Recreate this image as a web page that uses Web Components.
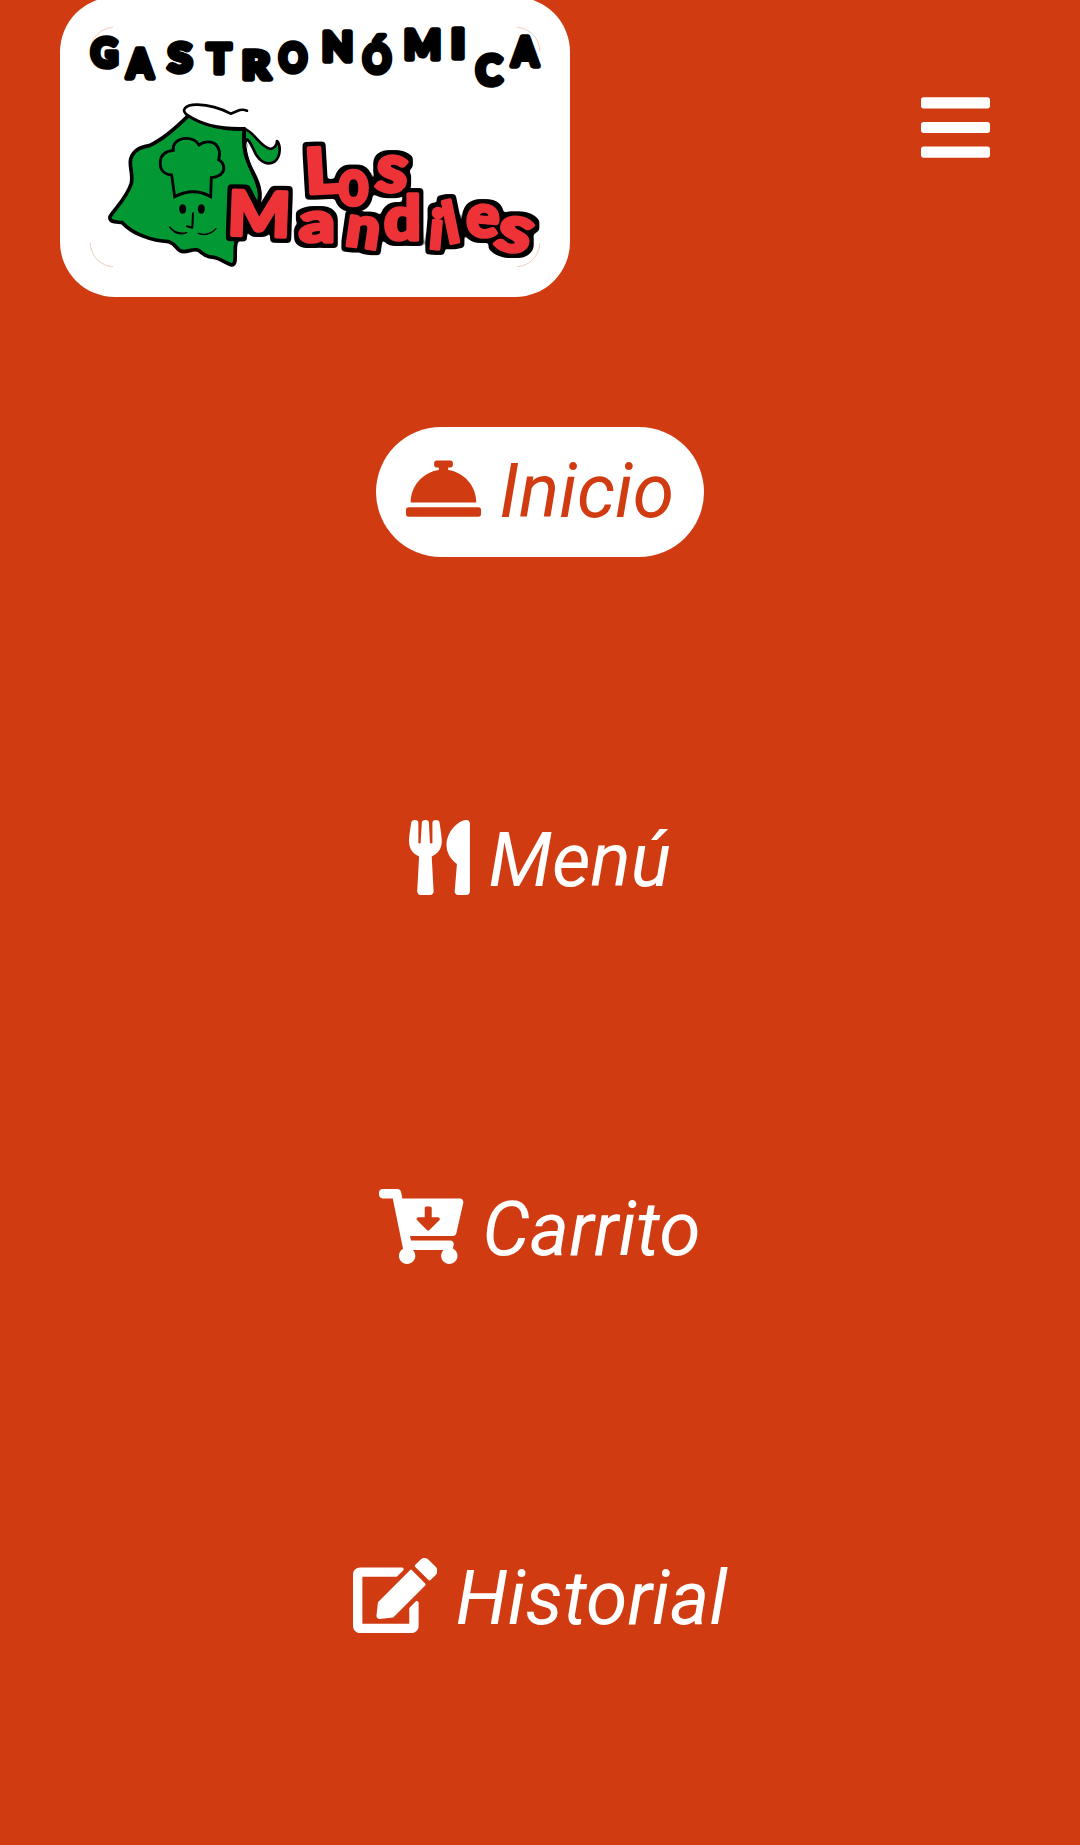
<!DOCTYPE html>
<html lang="es">
<head>
<meta charset="utf-8">
<title>Gastronómica Los Mandiles</title>
<style>
  html, body { margin: 0; background: #d13b11; }
  body { height: 1845px; overflow: hidden; font-family: Roboto, "Open Sans", sans-serif; }
</style>
</head>
<body>
<mandiles-page>
  <brand-logo slot="brand"></brand-logo>
  <menu-toggle slot="toggle"></menu-toggle>
  <nav-item icon="bell" active>Inicio</nav-item>
  <nav-item icon="utensils">Menú</nav-item>
  <nav-item icon="cart">Carrito</nav-item>
  <nav-item icon="edit">Historial</nav-item>
</mandiles-page>

<template id="page-tpl">
  <style>
    :host { display: block; height: 1845px; overflow: hidden; background: #d13b11; color: #fff; }
    header { display: flex; justify-content: space-between; align-items: flex-start; height: 300px; padding: 0 90px 0 60px; margin-top: -3px; }
    nav { display: flex; flex-direction: column; align-items: center; gap: 239px; padding-top: 130px; }
  </style>
  <header><slot name="brand"></slot><slot name="toggle"></slot></header>
  <nav><slot></slot></nav>
</template>

<template id="logo-tpl">
  <style>
    :host { display: block; box-sizing: border-box; width: 510px; height: 300px; padding: 30px; border-radius: 55px; background: #fff; }
    svg { display: block; overflow: visible; }
    text { white-space: pre; }
    .title { font: 900 40px Lato, Roboto, sans-serif; fill: #000; stroke: #000; stroke-width: 5.500; stroke-linejoin: round; }
    .name { font: 900 60px Lato, Roboto, sans-serif; fill: #ee3338; stroke: #ee3338; stroke-width: 3.600; stroke-linejoin: round; filter: url(#outline); }
  </style>
  <svg width="450" height="240" viewBox="90 27 450 240">
    <defs>
      <filter id="outline" x="-10%" y="-20%" width="120%" height="140%" color-interpolation-filters="sRGB">
        <feMorphology in="SourceAlpha" operator="dilate" radius="4"/>
        <feGaussianBlur stdDeviation="1.600"/>
        <feComponentTransfer result="edge"><feFuncA type="linear" slope="4" intercept="-1.300"/></feComponentTransfer>
        <feMerge><feMergeNode in="edge"/><feMergeNode in="SourceGraphic"/></feMerge>
      </filter>
    </defs>
    <g fill="none" stroke="#f0bcae" stroke-width=".8">
      <path d="M90.300 51A24 24 0 0 1 113 27.300M517 27.300A24 24 0 0 1 539.700 51M539.700 243A24 24 0 0 1 517 266.700M113 266.700A24 24 0 0 1 90.300 243"/>
    </g>
    <g transform="translate(90 90) scale(.333333)" stroke="#000" stroke-linejoin="round" stroke-linecap="round">
      <path fill="#029935" stroke-width="11" d="M295 77C260 112 220 148 178 167C152 172 131 178 122 207C117 232 130 249 124 280C111 323 77 353 60 380C57 397 76 395 97 398C128 432 186 453 236 455C262 462 258 484 281 485C298 484 312 475 326 481C339 492 350 501 371 502C393 507 411 521 425 525C443 524 431 488 438 458C458 430 480 403 502 355C517 327 510 293 490 252C474 220 463 180 464 117C400 119 350 109 295 77Z"/>
      <path fill="#fff" stroke="none" d="M468 155C477 190 494 211 540 225V300L513 290C495 250 471 209 468 155Z"/>
      <path fill="#029935" stroke-width="8" d="M464 117C492 125 511 172 542 177C554 174 561 165 561 153C572 165 573 199 555 214C533 228 513 216 499 195C485 170 479 144 464 148Z"/>
      <path fill="none" stroke-width="11" d="M463 120C455 190 476 220 492 253C510 288 514 312 504 347"/>
      <path fill="#fff" stroke="none" d="M295 77C269 61 285 43 323 44C362 45 401 60 422 71L463 110C400 115 338 106 295 77Z"/>
      <path fill="none" stroke-width="8" d="M295 77C269 61 285 43 323 44C362 45 401 60 422 71L442 63Q456 56 471 62M295 77C340 107 400 117 463 115"/>
      <path fill="none" stroke-width="8.500" stroke-linejoin="miter" stroke-linecap="butt" d="M254 320L245 255C217 253 209 235 211 214C213 193 228 183 250 181C247 159 266 145 288 145C307 145 320 153 327 165C343 153 365 153 378 164C391 177 390 195 386 209C401 216 406 236 397 248C389 259 378 262 364 263L362 320C327 300 289 302 254 320Z"/>
      <g stroke="none"><ellipse cx="278" cy="357" rx="10.500" ry="14.500"/><ellipse cx="334" cy="357" rx="10.500" ry="14.500"/></g>
      <path fill="none" stroke-width="6" d="M309 370L307 413L291 409"/>
      <path stroke-width="4" d="M239 411Q259 435 290 428Q258 440 239 411ZM378 416Q356 440 325 430Q354 442 378 416Z"/>
    </g>
    <text class="title" id="title"></text>
    <text class="name" id="los"></text>
    <text class="name" id="mandiles"></text>
  </svg>
</template>

<template id="toggle-tpl">
  <style>
    :host { display: block; margin-top: 91px; }
    button { display: block; margin: 0; padding: 0; border: 0; background: none; color: #fff; }
    svg { display: block; width: 69px; height: 79px; }
  </style>
  <button aria-label="Menu"><svg viewBox="0 0 448 512" preserveAspectRatio="xMaxYMid meet" fill="currentColor"><path d="M16 132h416c8.837 0 16-7.163 16-16V76c0-8.837-7.163-16-16-16H16C7.163 60 0 67.163 0 76v40c0 8.837 7.163 16 16 16zm0 160h416c8.837 0 16-7.163 16-16v-40c0-8.837-7.163-16-16-16H16c-8.837 0-16 7.163-16 16v40c0 8.837 7.163 16 16 16zm0 160h416c8.837 0 16-7.163 16-16v-40c0-8.837-7.163-16-16-16H16c-8.837 0-16 7.163-16 16v40c0 8.837 7.163 16 16 16z"/></svg></button>
</template>

<template id="item-tpl">
  <style>
    :host { display: block; }
    a { display: flex; align-items: center; gap: 18.500px; box-sizing: border-box; height: 130px; padding: 0 30px 2px; border-radius: 65px; color: #fff; font-size: 75px; line-height: 88px; font-style: italic; white-space: nowrap; }
    :host([active]) a { background: #fff; color: #d13b11; }
    svg { display: block; height: 75px; margin-top: -5px; }
  </style>
  <a><svg fill="currentColor"><path/></svg><span><slot></slot></span></a>
</template>

<script>
const stamp = (host, id) => {
  const root = host.attachShadow({ mode: 'open' });
  root.append(document.getElementById(id).content.cloneNode(true));
  return root;
};

const ICONS = {
  bell: [512, 'M288 130.54V112h16c8.84 0 16-7.16 16-16V80c0-8.84-7.16-16-16-16h-96c-8.84 0-16 7.16-16 16v16c0 8.84 7.16 16 16 16h16v18.54C115.49 146.11 32 239.18 32 352h448c0-112.82-83.49-205.89-192-221.46zM496 384H16c-8.84 0-16 7.16-16 16v32c0 8.84 7.16 16 16 16h480c8.84 0 16-7.16 16-16v-32c0-8.84-7.16-16-16-16z'],
  utensils: [416, 'M207.9 15.2c.8 4.7 16.1 94.5 16.1 128.8 0 52.3-27.8 89.6-68.9 104.6L168 486.7c.7 13.7-10.2 25.3-24 25.3H80c-13.7 0-24.7-11.5-24-25.3l12.9-238.1C27.7 233.6 0 196.2 0 144 0 109.6 15.3 19.9 16.1 15.2 19.3-5.1 61.4-5.4 64 16.3v141.2c1.3 3.4 15.1 3.2 16 0 1.4-25.3 7.9-139.2 8-141.8 3.3-20.8 44.7-20.8 47.9 0 .2 2.7 6.6 116.5 8 141.8.9 3.2 14.8 3.4 16 0V16.3c2.6-21.6 44.8-21.4 48-1.1zm119.2 285.7l-15 185.1c-1.2 14 9.9 26 23.9 26h56c13.3 0 24-10.7 24-24V24c0-13.2-10.7-24-24-24-82.5 0-221.4 178.5-64.9 300.9z'],
  cart: [576, 'M504.717 320H211.572l6.545 32h268.418c15.401 0 26.816 14.301 23.403 29.319l-5.517 24.276C523.112 414.668 536 433.828 536 456c0 31.202-25.519 56.444-56.824 55.994-29.823-.429-54.35-24.631-55.155-54.447-.44-16.287 6.085-31.049 16.803-41.548H231.176C241.553 426.165 248 440.326 248 456c0 31.813-26.528 57.431-58.67 55.938-28.54-1.325-51.751-24.385-53.251-52.917-1.158-22.034 10.436-41.455 28.051-51.586L93.883 64H24C10.745 64 0 53.255 0 40V24C0 10.745 10.745 0 24 0h102.529c11.401 0 21.228 8.021 23.513 19.19L159.208 64H551.99c15.401 0 26.816 14.301 23.403 29.319l-47.273 208C525.637 312.246 515.923 320 504.717 320zM403.029 192H360v-60c0-6.627-5.373-12-12-12h-24c-6.627 0-12 5.373-12 12v60h-43.029c-10.691 0-16.045 12.926-8.485 20.485l67.029 67.029c4.686 4.686 12.284 4.686 16.971 0l67.029-67.029c7.559-7.559 2.205-20.485-8.486-20.485z'],
  edit: [576, 'M402.6 83.2l90.2 90.2c3.8 3.8 3.8 10 0 13.8L274.4 405.6l-92.8 10.3c-12.4 1.4-22.9-9.1-21.5-21.5l10.3-92.8L388.8 83.2c3.8-3.8 10-3.8 13.8 0zm162-22.9l-48.8-48.8c-15.2-15.2-39.9-15.2-55.2 0l-35.4 35.4c-3.8 3.8-3.8 10 0 13.8l90.2 90.2c3.8 3.8 10 3.8 13.8 0l35.4-35.4c15.2-15.3 15.2-40 0-55.2zM384 346.2V448H64V128h229.8c3.2 0 6.2-1.3 8.5-3.5l40-40c7.6-7.6 2.2-20.5-8.5-20.5H48C21.5 64 0 85.5 0 112v352c0 26.5 21.5 48 48 48h352c26.5 0 48-21.5 48-48V306.2c0-10.7-12.9-16-20.5-8.5l-40 40c-2.2 2.3-3.5 5.3-3.5 8.5z']
};

class MandilesPage extends HTMLElement {
  constructor() { super(); stamp(this, 'page-tpl'); }
}

class BrandLogo extends HTMLElement {
  // Letter rows: character, left edge, baseline, advance width, font size, rotation
  static rows = {
    title: [['G', 91, 67, 27, 40], ['A', 127, 78, 26, 40], ['S', 168, 72, 24, 40], ['T', 207, 73, 24, 40], ['R', 242, 79, 28, 38], ['O', 279, 72, 28, 40],
      ['N', 322, 61, 31, 39], ['Ó', 363, 73, 28, 39], ['M', 404, 59, 37, 39], ['I', 451, 58, 14, 39], ['C', 476, 85, 26, 41], ['A', 512, 66, 26, 40]],
    los: [['L', 306, 194, 37, 63, -3], ['o', 338, 205, 31, 66, 0], ['s', 374, 190, 32, 68, 6]],
    mandiles: [['M', 227, 235, 63, 62, 2], ['a', 299, 242, 36, 58, 0], ['n', 344, 245, 34, 58, 8], ['d', 384, 240, 37, 60, 0], ['i', 428, 248, 14, 54, 5], ['l', 448, 244, 14, 57, -12], ['e', 465, 235, 33, 60, 5], ['s', 492, 247, 35, 66, 16]]
  };
  constructor() {
    super();
    const root = stamp(this, 'logo-tpl');
    for (const [id, row] of Object.entries(BrandLogo.rows)) {
      const text = root.getElementById(id);
      for (const [ch, x, y, w, size, rot = 0] of row) {
        const t = document.createElementNS('http://www.w3.org/2000/svg', 'tspan');
        t.textContent = ch;
        t.setAttribute('x', x);
        t.setAttribute('y', y);
        t.setAttribute('textLength', w);
        t.setAttribute('lengthAdjust', 'spacingAndGlyphs');
        if (rot) t.setAttribute('rotate', rot);
        t.style.fontSize = size + 'px';
        text.append(t);
      }
    }
  }
}

class MenuToggle extends HTMLElement {
  constructor() { super(); stamp(this, 'toggle-tpl'); }
}

class NavItem extends HTMLElement {
  constructor() { super(); this.view = stamp(this, 'item-tpl'); }
  connectedCallback() {
    const [w, d] = ICONS[this.getAttribute('icon')];
    const svg = this.view.querySelector('svg');
    svg.setAttribute('viewBox', `0 0 ${w} 512`);
    svg.style.width = (w / 512 * 75) + 'px';
    svg.firstElementChild.setAttribute('d', d);
  }
}

customElements.define('mandiles-page', MandilesPage);
customElements.define('brand-logo', BrandLogo);
customElements.define('menu-toggle', MenuToggle);
customElements.define('nav-item', NavItem);
</script>
</body>
</html>
